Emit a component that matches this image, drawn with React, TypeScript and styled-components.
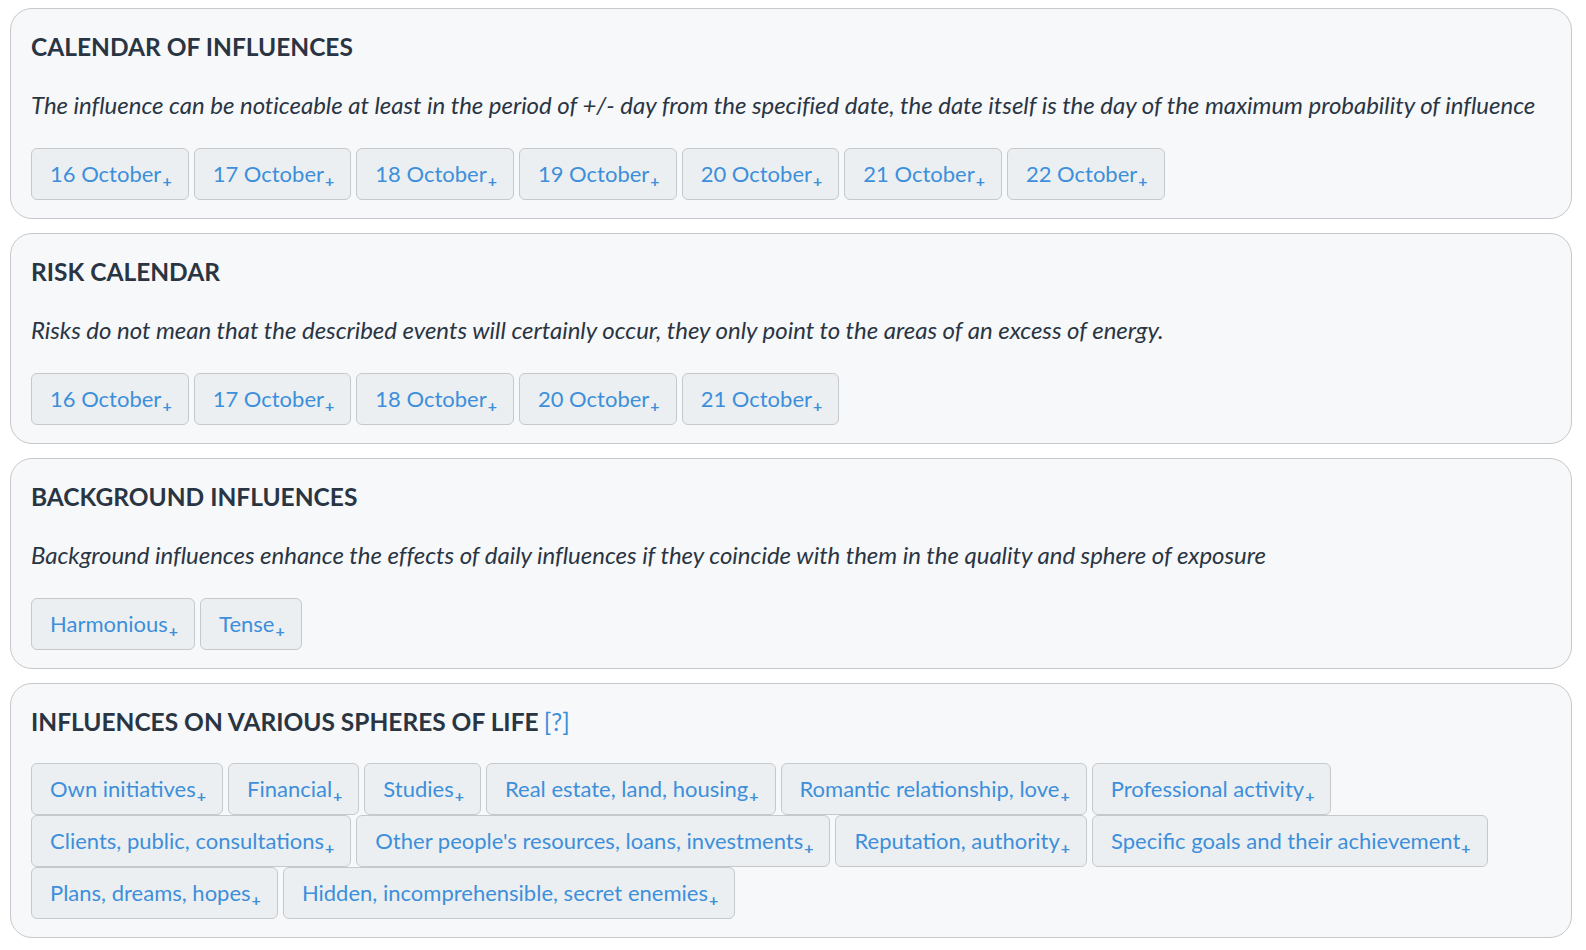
import React from "react";
import styled, { createGlobalStyle } from "styled-components";

const Global = createGlobalStyle`
  html, body { margin: 0; padding: 0; background: #ffffff; }
  body { font-family: Lato, "Open Sans", sans-serif; }
`;

const Page = styled.div`
  padding: 8px 14px 8px 10px;
  display: flex;
  flex-direction: column;
  gap: 14px;
`;

const Card = styled.section`
  background: #f7f8fa;
  border: 1px solid #c6c8cb;
  border-radius: 22px;
  padding: 21px 20px 18px 20px;
`;

const Title = styled.h2`
  margin: 0 0 24px 0;
  font-family: Lato, sans-serif;
  font-weight: 700;
  font-size: 24.5px;
  line-height: 34px;
  color: #2a3543;
`;

const Help = styled.span`
  font-weight: 400;
  color: #3d8fdb;
  margin-left: -1px;
`;

const Note = styled.p`
  margin: 0 0 26px 0;
  font-family: Lato, sans-serif;
  font-style: italic;
  font-size: 24px;
  line-height: 34px;
  letter-spacing: -0.035px;
  color: #2a3543;
`;

const Chips = styled.div`
  display: flex;
  flex-wrap: wrap;
  column-gap: 5px;
  row-gap: 0;
`;

const Chip = styled.button`
  font-family: Lato, sans-serif;
  font-size: 22px;
  line-height: 30px;
  color: #3d8fdb;
  background: #eceff1;
  border: 1px solid #c6c9cc;
  border-radius: 6px;
  padding: 10px 16px 10px 18px;
  cursor: pointer;
  white-space: nowrap;
`;

const Plus = styled.sub`
  font-size: 16px;
  font-weight: 700;
  line-height: 0;
  vertical-align: -5px;
  margin-left: 1px;
`;

type Section = {
  title: string;
  help?: boolean;
  note?: string;
  items: string[];
};

const sections: Section[] = [
  {
    title: "CALENDAR OF INFLUENCES",
    note:
      "The influence can be noticeable at least in the period of +/- day from the specified date, the date itself is the day of the maximum probability of influence",
    items: [
      "16 October",
      "17 October",
      "18 October",
      "19 October",
      "20 October",
      "21 October",
      "22 October",
    ],
  },
  {
    title: "RISK CALENDAR",
    note:
      "Risks do not mean that the described events will certainly occur, they only point to the areas of an excess of energy.",
    items: ["16 October", "17 October", "18 October", "20 October", "21 October"],
  },
  {
    title: "BACKGROUND INFLUENCES",
    note:
      "Background influences enhance the effects of daily influences if they coincide with them in the quality and sphere of exposure",
    items: ["Harmonious", "Tense"],
  },
  {
    title: "INFLUENCES ON VARIOUS SPHERES OF LIFE",
    help: true,
    items: [
      "Own initiatives",
      "Financial",
      "Studies",
      "Real estate, land, housing",
      "Romantic relationship, love",
      "Professional activity",
      "Clients, public, consultations",
      "Other people's resources, loans, investments",
      "Reputation, authority",
      "Specific goals and their achievement",
      "Plans, dreams, hopes",
      "Hidden, incomprehensible, secret enemies",
    ],
  },
];

export default function App() {
  return (
    <>
      <Global />
      <Page>
        {sections.map((s) => (
          <Card key={s.title}>
            <Title>
              {s.title}
              {s.help && <Help> [?]</Help>}
            </Title>
            {s.note && <Note>{s.note}</Note>}
            <Chips>
              {s.items.map((it) => (
                <Chip key={it}>
                  {it}
                  <Plus>+</Plus>
                </Chip>
              ))}
            </Chips>
          </Card>
        ))}
      </Page>
    </>
  );
}
